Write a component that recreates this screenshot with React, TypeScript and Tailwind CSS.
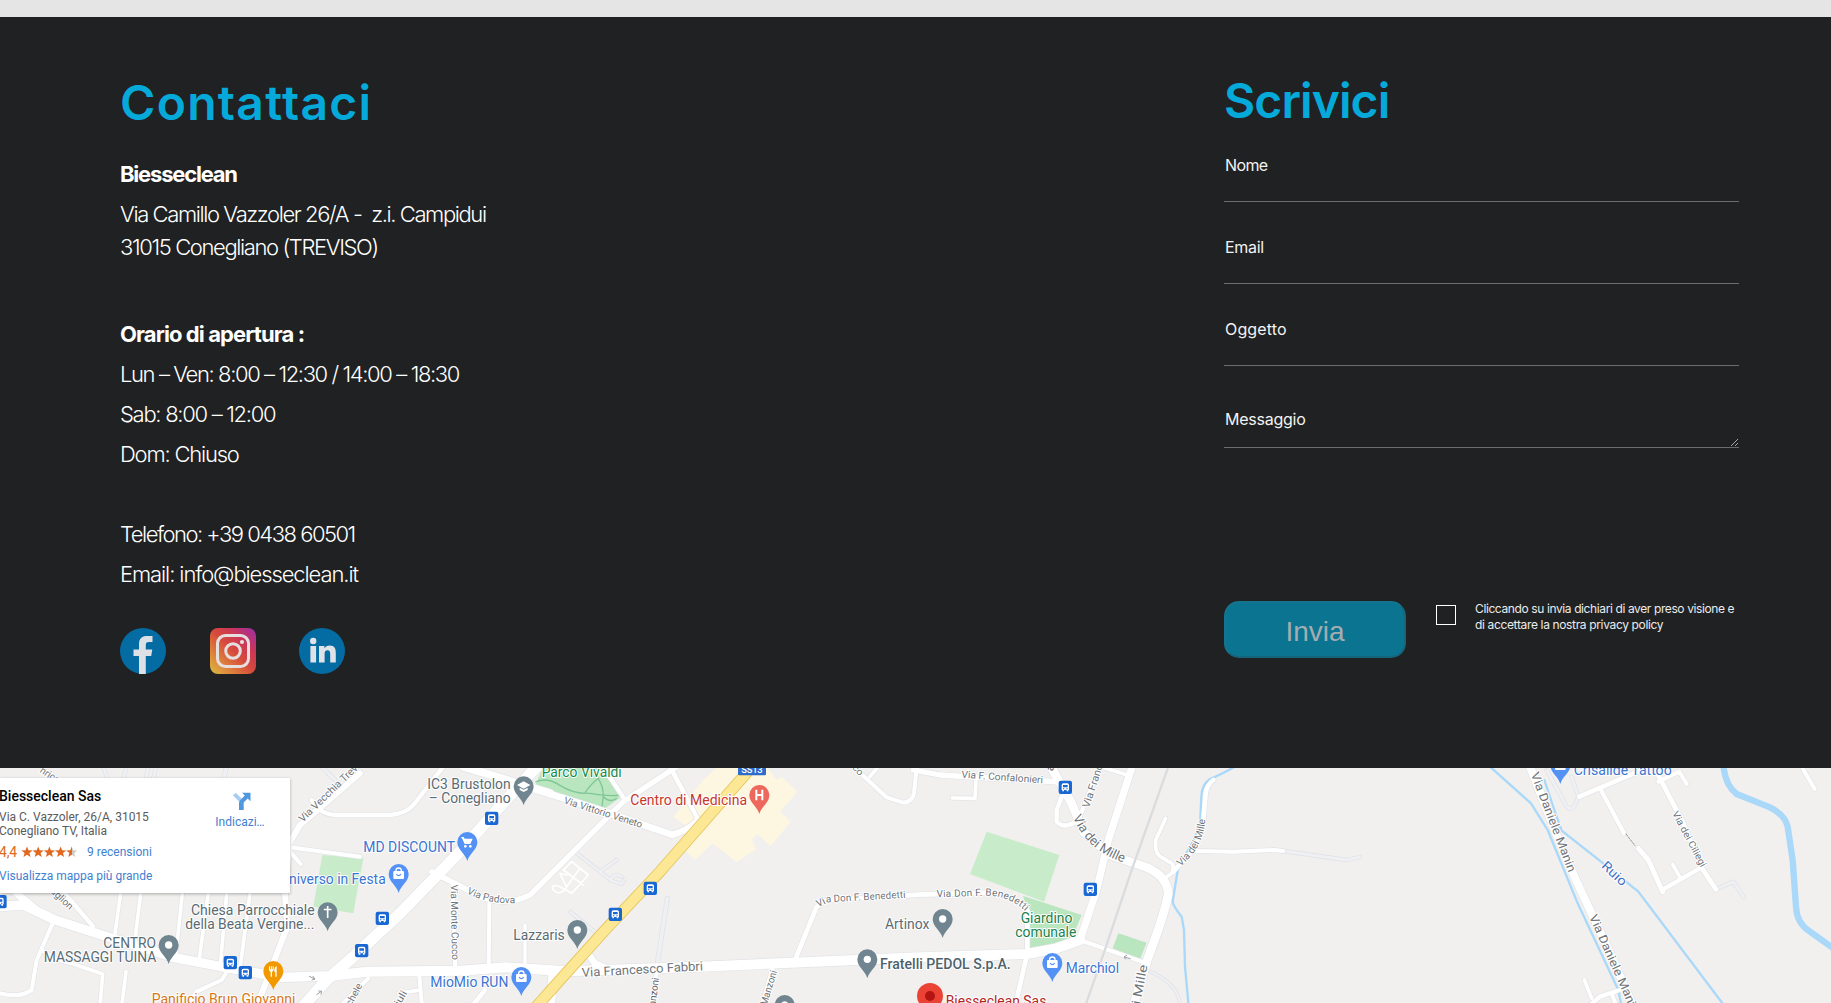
import React from "react";

/* Map geometry is in a fine grid: three units per CSS pixel. */
type Road = [number, string];

const roads: Road[] = [
  [28, "M-10 440 L70 435 L160 478 L320 530 L520 592 L700 627 L850 652 L970 648"],
  [22, "M50 400 L110 450"],
  [34, "M1610 20 L1500 140 L1380 275 L1200 460 L1060 590 L980 660 L890 760"],
  [30, "M970 650 L1100 635 L1380 632 L1520 622 L1700 634 L2100 620 L2760 592 L3080 582 L3170 565 L3240 540"],
  [18, "M1080 40 L900 195 L868 250 L855 400 L862 500 L835 570 L770 740"],
  [13, "M935 120 Q960 165 1010 165 L1170 165 Q1220 160 1240 135 L1330 20"],
  [12, "M870 262 L1080 290"],
  [12, "M870 275 L902 312"],
  [11, "M362 400 L345 520"], [11, "M422 400 L405 540"], [11, "M547 400 L528 580"],
  [11, "M625 400 L598 595"], [11, "M680 400 L662 605"], [11, "M750 400 L720 625"],
  [13, "M185 390 L280 500"],
  [12, "M158 490 L110 600 L95 690 Q60 715 0 700"],
  [11, "M125 570 Q160 600 220 612 L308 642 L300 740"],
  [11, "M378 635 L365 740"],
  [12, "M690 620 L665 660 L590 695 L560 740"],
  [16, "M1295 335 L1380 378 L1440 410 Q1520 440 1590 405 L1710 285 L1870 125 L2030 20"],
  [13, "M1358 372 L1366 630"],
  [12, "M1105 655 L1010 750"], [12, "M1258 645 L1266 740"], [11, "M1195 700 L1260 690"],
  [24, "M1390 20 L1560 72 L1650 100"],
  [20, "M1600 86 L1800 150 L2015 224 Q2060 215 2095 180"],
  [14, "M2010 20 L2095 180"],
  [13, "M1805 15 L1872 115"],
  [12, "M1468 430 L1466 620"], [10, "M1575 495 L1575 620"],
  [20, "M1760 575 L1785 610 L1840 635"],
  [28, "M1660 640 L1650 740"], [14, "M1455 690 L1415 740"],
  [14, "M2385 600 L2450 440 L2480 420 L2760 404 L2965 398 Q3050 405 3082 450 L3082 580"],
  [12, "M2320 615 L2285 740"], [11, "M1972 630 L1952 740"],
  [12, "M2560 20 L2660 112 L2710 128 Q2738 125 2742 100 L2750 20"],
  [11, "M2610 50 L2635 20"],
  [16, "M2740 30 L2820 45 L3180 66"],
  [11, "M2928 60 L2925 115 L2857 114"],
  [26, "M3150 15 L3215 130 L3250 215 L3330 285 L3420 315 Q3500 340 3505 400 Q3495 460 3440 605 L3400 740"],
  [13, "M3185 110 L3170 150 L3170 185 Q3195 210 3235 180 L3300 20"],
  [22, "M3398 15 L3325 240 L3290 390 L3240 540"],
  [11, "M3315 24 L3382 45"],
  [12, "M3240 540 L3440 610"], [14, "M3082 580 L3045 740"],
  [11, "M3497 175 L3467 240 Q3462 285 3490 295 L3518 312 Q3525 340 3500 350"],
  [14, "M3640 60 Q3620 75 3617 100 L3608 200 L3580 270 L3520 335"],
  [12, "M3590 273 L3700 275 L3822 270 L3850 273"],
  [24, "M4588 15 L4670 225 L4730 365 L4810 535 L4900 740"],
  [14, "M4738 110 L4960 15 L4985 65 L5050 190 L5104 322 L5148 388"],
  [13, "M4803 90 L4872 220"], [15, "M4915 265 L4945 300 L4988 395"],
  [12, "M4975 65 L5038 35 L5060 72"], [13, "M4990 388 L5104 322"],
  [11, "M5018 313 L5040 352"], [12, "M5405 20 L5444 87"],
  [11, "M4753 660 L4775 715"], [13, "M4765 740 L4800 710 L4860 690"], [12, "M4835 700 L4850 740"],
];

const lanes: Road[] = [
  [9, "M310 20 L322 55"], [9, "M380 20 L370 55"], [9, "M445 20 L438 55"], [9, "M468 20 L460 55"], [11, "M680 20 L670 60"],
  [10, "M965 20 L1005 60"],
  [8, "M1725 275 L1800 335 L1835 362 L1865 372 L1875 358 M1800 335 L1850 300 M1832 362 Q1840 335 1865 350"],
  [8, "M1710 455 L1790 520"], [11, "M2002 415 L1972 610"],
  [9, "M3850 273 L4040 300 L4080 291"], [7, "M3440 630 Q3540 670 3540 740"],
  [9, "M4640 30 L4700 140 Q4720 160 4735 110 L4715 50"],
  [9, "M5148 388 L5200 365 L5232 412"],
];

const PIN = "M0 57 C-6 34 -30 24 -30 0 A30 30 0 1 1 30 0 C30 24 6 34 0 57Z";

function Pin({ x, y, color, kind }: { x: number; y: number; color: string; kind?: string }) {
  return (
    <g transform={`translate(${x} ${y})`}>
      <path d={PIN} fill={color} />
      {!kind && <circle r="11" fill="#fff" />}
      {kind === "cross" && <path d="M-2.500 -19h5v8h9v5h-9v23h-5v-23h-9v-5h9z" fill="#fff" />}
      {kind === "bag" && (
        <g>
          <rect x="-16" y="-9" width="32" height="24" rx="3" fill="#fff" />
          <path d="M-8 -8v-3a8 7 0 0 1 16 0v3" fill="none" stroke="#fff" strokeWidth="4" />
          <path d="M-7 0q7 10 14 0" fill="none" stroke={color} strokeWidth="3.500" />
        </g>
      )}
      {kind === "cart" && (
        <g fill="#fff">
          <path d="M-18 -15h7l3 5h24l-7 16h-17l-8-17h-2z" />
          <circle cx="-6" cy="13" r="4" /><circle cx="9" cy="13" r="4" />
        </g>
      )}
      {kind === "school" && (
        <g fill="#fff"><path d="M0 -15 20 -4 0 7 -20 -4z" /><path d="M-12 4v7l12 6 12-6V4L0 10z" /></g>
      )}
      {kind === "food" && (
        <path d="M-13 -14v10q0 5 5 6v15h4v-15q5-1 5-6v-10h-3v9h-2.500v-9h-3v9h-2.500v-9zM6 17h4V-15q-7 3-7 12v6h3z" fill="#fff" />
      )}
      {kind === "hospital" && <path d="M-12 -16h6v13h12v-13h6v32h-6V3H-6v13h-6z" fill="#fff" />}
    </g>
  );
}

function Bus({ x, y }: { x: number; y: number }) {
  return (
    <g transform={`translate(${x} ${y})`}>
      <rect x="-20" y="-20" width="40" height="40" rx="6" fill="#1967d2" />
      <path d="M-11 -7q0-5 5-5h12q5 0 5 5v15h-2v4h-5v-4h-8v4h-5v-4h-2z" fill="#fff" />
      <path d="M-7 -7h14v7h-14zM-7 3h4v3h-4zM3 3h4v3h-4z" fill="#1967d2" />
    </g>
  );
}

interface LabelProps {
  x: number; y: number; w: number; children: string; color?: string; size?: number; weight?: number; rot?: number;
}
function Label({ x, y, w, children, color = "#5b6b73", size = 42.5, weight = 400, rot = 0 }: LabelProps) {
  return (
    <text
      transform={`translate(${x} ${y}) rotate(${rot})`}
      textLength={w}
      lengthAdjust="spacingAndGlyphs"
      fontSize={size}
      fontWeight={weight}
      fill={color}
      stroke="#fff"
      strokeWidth="6"
      strokeLinejoin="round"
      paintOrder="stroke"
    >
      {children}
    </text>
  );
}

function Curved({ id, d, children, size = 30, w }: { id: string; d: string; children: string; size?: number; w: number }) {
  return (
    <g>
      <path id={id} d={d} fill="none" />
      <text fontSize={size} fill="#70757a" stroke="#fff" strokeWidth="6" strokeLinejoin="round" paintOrder="stroke" textLength={w}>
        <textPath href={`#${id}`} textLength={w}>{children}</textPath>
      </text>
    </g>
  );
}

const BLUE = "#3b74d1";
const GREY = "#70858f";

function MapDrawing() {
  return (
    <svg className="block h-[235px] w-full font-['Roboto',sans-serif]" viewBox="0 24 5493 705" preserveAspectRatio="none">
      <rect x="0" y="24" width="5493" height="705" fill="#f1f0ef" />
      <g fill="#c8ecca">
        <path d="M967 285 1090 295 1060 460 940 440Z" />
        <path d="M2960 215 3178 285 3132 425 2910 342Z" />
      </g>
      <g fill="#b9e5bf">
        <path d="M1630 20 1604 80 1805 152 1865 110 1825 20Z" />
        <path d="M3070 408 3245 465 3210 548 3090 564Z" />
        <path d="M3355 520 3440 548 3420 597 3338 565Z" />
      </g>
      <path d="M1606 66Q1640 50 1680 76T1770 100Q1830 110 1860 105M1755 98Q1775 70 1795 55Q1810 80 1810 108L1805 145M1810 110Q1830 130 1850 115" fill="none" stroke="#7fc795" strokeWidth="4" />
      <path d="M2110 60 2155 20 2300 20 2330 60 2345 50 2392 95 2340 155 2372 185 2312 258 2272 222 2256 238 2268 268 2210 306 2138 250 2085 300 2052 268 2090 220 2020 170Z" fill="#fdf6e0" />

      <g fill="none" strokeLinecap="round" strokeLinejoin="round">
        {lanes.map(([w, d]) => <path key={d} d={d} stroke="#dfe1e5" strokeWidth={w + 4} />)}
        {lanes.map(([w, d]) => <path key={d} d={d} stroke="#eef0f3" strokeWidth={w} />)}
        {roads.map(([w, d]) => <path key={d} d={d} stroke="#e2e3e6" strokeWidth={w + 4} />)}
        <g stroke="#a9d8f9" strokeWidth="7">
          <path d="M3705 20 Q3660 45 3630 57 Q3605 75 3604 110 L3600 200 L3570 262 L3535 320 L3518 425 Q3520 440 3545 470 L3552 510 L3555 620 L3566 740" />
          <path d="M4470 20 L4593 130 L4643 210 L4733 430 L4855 690 L4865 740" />
          <path d="M4633 60 L4663 150 L4685 212 L4803 305 L4915 395 L5175 740" />
          <path d="M5170 15 Q5175 75 5210 102 L5310 142 Q5355 165 5363 200 L5378 300 L5388 440 Q5390 490 5430 515 L5510 572" strokeWidth="19" />
        </g>
        {roads.map(([w, d]) => <path key={d} d={d} stroke="#fff" strokeWidth={w} />)}
        <path d="M3505 20 L3395 330 L3318 560 L3255 740" stroke="#dbdcde" strokeWidth="7" />
        <path d="M1715 305L1765 345L1715 400L1680 380Q1650 370 1660 390Q1680 410 1700 382L1680 340L1700 345M1690 330L1750 375M1740 325L1700 380M1715 305L1690 330" stroke="#fff" strokeWidth="5" />
        <path d="M2265 10 L2120 175 L1980 335 L1820 505 L1680 660 L1600 750" stroke="#e5c65c" strokeWidth="35" />
        <path d="M2265 10 L2120 175 L1980 335 L1820 505 L1680 660 L1600 750" stroke="#fce794" strokeWidth="30" />
        <path d="M4878 222l27 35" stroke="#8d9297" strokeWidth="3" strokeDasharray="6 5" />
        <path d="M928 649l16 8m-5-8 6 8-9 3M950 704l14-10m-8-1 9 1-2 8M3391 596l-18-5m7-5-8 5 5 6" stroke="#9da1a6" strokeWidth="3" />
      </g>

      <Label x={118} y={36} w={98} size={30} color="#70757a" rot={33}>nrico C.</Label>
      <Label x={150} y={396} w={80} size={30} color="#70757a" rot={43}>aglion</Label>
      <Label x={908} y={188} w={240} size={31} color="#70757a" rot={-44}>Via Vecchia Trevi</Label>
      <Label x={1352} y={374} w={226} size={30} color="#70757a" rot={89}>Via Monte Cucco</Label>
      <Label x={1038} y={770} w={106} size={30} color="#70757a" rot={-62}>Michele</Label>
      <Label x={1184} y={765} w={76} size={30} color="#70757a" rot={-60}>Friuli</Label>
      <Label x={1690} y={130} w={245} size={30} color="#70757a" rot={17.5}>Via Vittorio Veneto</Label>
      <Curved id="padova" d="M1400 400 Q1465 435 1560 429" w={150}>Via Padova</Curved>
      <Label x={1746} y={651} w={364} size={38} color="#70757a" rot={-3.2}>Via Francesco Fabbri</Label>
      <Label x={1962} y={765} w={112} size={30} color="#5f6368" rot={-82}>Manzoni</Label>
      <Label x={2300} y={738} w={108} size={30} color="#70757a" rot={-73}>Manzoni</Label>
      <Curved id="benedetti-west" d="M2455 442 L2485 427 L2722 413" w={266}>Via Don F. Benedetti</Curved>
      <Curved id="benedetti-east" d="M2810 412 L2965 407 Q3035 410 3080 458" w={278}>Via Don F. Benedetti</Curved>
      <Label x={2884} y={53} w={245} size={30} color="#70757a" rot={4}>Via F. Confalonieri</Label>
      <Label x={3158} y={35} w={22} size={34} color="#5f6368" rot={-75}>a</Label>
      <Label x={2555} y={24} w={35} size={28} color="#70757a" rot={45}>co</Label>
      <Label x={3267} y={145} w={160} size={31} color="#70757a" rot={-72}>Via Francia</Label>
      <Curved id="mille-main" d="M3218 172 C3245 225 3270 270 3370 308" size={39} w={210}>Via dei Mille</Curved>
      <Curved id="mille-east" d="M3541 320 Q3612 262 3616 175" size={31} w={166}>Via dei Mille</Curved>
      <Label x={3410} y={785} w={172} size={37} color="#70757a" rot={-79}>dei Mille</Label>
      <Label x={4592} y={42} w={318} size={36} color="#70757a" rot={69}>Via Daniele Manin</Label>
      <Label x={4767} y={470} w={318} size={36} color="#70757a" rot={66}>Via Daniele Manin</Label>
      <Label x={5016} y={160} w={185} size={29} color="#70757a" rot={62}>Via dei Ciliegi</Label>
      <Label x={4802} y={320} w={88} size={39} color="#3f6fc4" rot={43}>Ruio</Label>

      <Bus x={0} y={425} /><Bus x={691} y={608} /><Bus x={736} y={638} /><Bus x={1085} y={572} /><Bus x={1147} y={475} />
      <Bus x={1475} y={175} /><Bus x={1951} y={385} /><Bus x={1846} y={463} /><Bus x={3196} y={82} /><Bus x={3271} y={388} />

      <Pin x={506} y={555} color={GREY} />
      <Label x={310} y={564} w={158}>CENTRO</Label>
      <Label x={131} y={606} w={338}>MASSAGGI TUINA</Label>
      <Pin x={983} y={457} color={GREY} kind="cross" />
      <Label x={573} y={465} w={371}>Chiesa Parrocchiale</Label>
      <Label x={556} y={507} w={387}>della Beata Vergine...</Label>
      <Pin x={820} y={633} color="#f29900" kind="food" />
      <Label x={455} y={732} w={431} color="#d67718">Panificio Brun Giovanni</Label>
      <Pin x={1196} y={342} color="#5491f5" kind="bag" />
      <Label x={840} y={372} w={317} color={BLUE}>Universo in Festa</Label>
      <Pin x={1402} y={246} color="#5491f5" kind="cart" />
      <Label x={1090} y={276} w={275} color={BLUE}>MD DISCOUNT</Label>
      <Pin x={1571} y={79} color={GREY} kind="school" />
      <Label x={1282} y={87} w={250}>IC3 Brustolon</Label>
      <Label x={1286} y={129} w={246}>– Conegliano</Label>
      <Label x={1625} y={51} w={240} color="#188a45">Parco Vivaldi</Label>
      <Pin x={2278} y={105} color="#ee675c" kind="hospital" />
      <Label x={1891} y={135} w={350} color="#c5382e">Centro di Medicina</Label>
      <Pin x={1732} y={510} color={GREY} />
      <Label x={1540} y={540} w={154}>Lazzaris</Label>
      <Pin x={1564} y={651} color="#5491f5" kind="bag" />
      <Label x={1291} y={681} w={234} color={BLUE}>MioMio RUN</Label>
      <Pin x={2602} y={598} color={GREY} />
      <Label x={2640} y={627} w={392} weight={500} color="#4d626c">Fratelli PEDOL S.p.A.</Label>
      <Pin x={2828} y={477} color={GREY} />
      <Label x={2655} y={507} w={133}>Artinox</Label>
      <Pin x={2354} y={735} color={GREY} />
      <Label x={3062} y={489} w={155} color="#23804a">Giardino</Label>
      <Label x={3046} y={531} w={183} color="#23804a">comunale</Label>
      <Pin x={3157} y={609} color="#5491f5" kind="bag" />
      <Label x={3197} y={639} w={160} color={BLUE}>Marchiol</Label>
      <circle cx="2790" cy="708" r="39" fill="#ea4335" /><circle cx="2790" cy="708" r="15" fill="#b31412" />
      <Label x={2837} y={737} w={302} color="#b3261e">Biesseclean Sas</Label>
      <Pin x={4681} y={15} color="#5491f5" kind="bag" />
      <Label x={4721} y={45} w={294} color={BLUE}>Crisalide Tattoo</Label>
      <rect x="2214" y="4" width="84" height="42" rx="4" fill="#2f6bc9" />
      <text x="2224" y="39" textLength="64" fontSize="28" fontWeight="500" fill="#fff">SS13</text>
    </svg>
  );
}

const STAR = "M6 .5 7.500 4.300 11.600 4.500 8.400 7 9.500 11 6 8.800 2.500 11 3.600 7 .4 4.500 4.500 4.300Z";

function MapCard() {
  return (
    <div className="absolute left-0 top-[10px] h-[115px] w-[290px] bg-white font-['Roboto',sans-serif] text-xs leading-[14px] text-[#5b5b5b] shadow-[0_1px_3px_rgba(0,0,0,0.3)]">
      <div className="-ml-px flex justify-between pt-[9px]">
        <div className="whitespace-nowrap">
          <div className="text-sm leading-[18px] font-medium text-black">Biesseclean Sas</div>
          <div className="mt-[5px]">Via C. Vazzoler, 26/A, 31015</div>
          <div>Conegliano TV, Italia</div>
          <div className="mt-[6px] flex items-center">
            <span className="w-[22px] text-sm leading-4 tracking-[-0.2px] text-[#dd6b20]">4,4</span>
            <svg className="h-3 w-[56px]" viewBox="0 0 56 12">
              <defs>
                <linearGradient id="half"><stop offset=".5" stopColor="#e0691f" /><stop offset=".5" stopColor="#cfcac6" /></linearGradient>
              </defs>
              {[0, 1, 2, 3, 4].map((i) => (
                <path key={i} d={STAR} transform={`translate(${i * 11.2} 0)`} fill={i === 4 ? "url(#half)" : "#e0691f"} />
              ))}
            </svg>
            <span className="ml-[10px] text-[#427fd0]">9 recensioni</span>
          </div>
          <div className="mt-[9px] text-[#427fd0]">Visualizza mappa più grande</div>
        </div>
        <div className="mr-[25px] flex w-[50px] flex-col items-center pt-[5px] text-[#427fd0]">
          <svg className="ml-[3px] h-[19px] w-[19px]" viewBox="0 0 19 19">
            <path d="M1 3.500 3.800 .7 9.500 6.500V12z" fill="#a9cdf1" />
            <path d="M7 18V11Q7 9.500 8 8.500L12.800 3.600 10 .8H18.500V9.200L15.700 6.400 11.700 10.500V18z" fill="#4f97df" />
          </svg>
          <div className="mt-1">Indicazi…</div>
        </div>
      </div>
    </div>
  );
}

const line = "whitespace-nowrap leading-[40px]";

function Contacts() {
  return (
    <section className="ml-[120px] w-[420px] pt-[55.5px] text-[22px] text-white">
      <h2 className="mb-[21.5px] text-[48px] leading-[60px] font-semibold tracking-[1.3px] text-[#06aada]">Contattaci</h2>
      <p className={`${line} font-bold tracking-[-1.2px]`}>Biesseclean</p>
      <p className="pt-[3.5px] leading-[33px] font-light whitespace-nowrap">
        <span className="tracking-[-1.4px]">Via Camillo Vazzoler 26/A -&nbsp; z.i. Campidui</span><br />
        <span className="tracking-[-1.38px]">31015 Conegliano (TREVISO)</span>
      </p>
      <p className={`${line} mt-[50.5px] font-bold tracking-[-0.9px]`}>Orario di apertura :</p>
      <p className={`${line} font-light tracking-[-1.4px]`}>Lun – Ven: 8:00 – 12:30 / 14:00 – 18:30</p>
      <p className={`${line} font-light tracking-[-1.3px]`}>Sab: 8:00 – 12:00</p>
      <p className={`${line} font-light tracking-[-1.2px]`}>Dom: Chiuso</p>
      <p className={`${line} mt-[40px] font-light tracking-[-1.5px]`}>Telefono: +39 0438 60501</p>
      <p className={`${line} font-light tracking-[-1.1px]`}>Email: info@biesseclean.it</p>
      <div className="mt-[34px] flex gap-[44px]">
        <svg className="size-[46px]" viewBox="0 0 46 46">
          <circle cx="23" cy="23" r="23" fill="#056ba3" />
          <path d="M19 46V28h-5.500v-6.500H19v-5.200C19 10.500 22 8 27 8h5.500v6H29c-2.500 0-3.200 1.200-3.200 3.200v4.300h6.500L31.200 28h-5.400v18a23 23 0 0 1-6.800 0z" fill="#dde0e4" />
        </svg>
        <svg className="size-[46px]" viewBox="0 0 46 46">
          <defs>
            <linearGradient id="insta" x1="0" y1="1" x2="1" y2="0">
              <stop offset="0" stopColor="#d9bd42" /><stop offset=".22" stopColor="#de8a3c" /><stop offset=".5" stopColor="#d74a3b" />
              <stop offset=".72" stopColor="#cb3659" /><stop offset="1" stopColor="#9c2fa8" />
            </linearGradient>
          </defs>
          <rect width="46" height="46" rx="8" fill="url(#insta)" />
          <rect x="7.500" y="7.500" width="31" height="31" rx="8" fill="none" stroke="#e5dfe0" strokeWidth="3" />
          <circle cx="23" cy="23" r="7.300" fill="none" stroke="#e5dfe0" strokeWidth="3" />
          <circle cx="32" cy="14" r="2.100" fill="#e5dfe0" />
        </svg>
        <svg className="-ml-px size-[46px]" viewBox="0 0 46 46">
          <circle cx="23" cy="23" r="23" fill="#056ba3" />
          <g fill="#dfe3e7">
            <circle cx="14.200" cy="13" r="3.200" />
            <path d="M11.400 18h5.700v16.500h-5.700zM20 18h5.400v2.300c1-1.700 2.900-2.800 5.200-2.800 5 0 6.200 3 6.200 7.700v9.300h-5.600v-8.300c0-2.200-.3-4-2.600-4s-3 1.600-3 4v8.300H20z" />
          </g>
        </svg>
      </div>
    </section>
  );
}

function Field({ label, className }: { label: string; className: string }) {
  return (
    <label className={`flex items-end border-b border-[#6a6c6d] pl-px text-[16px] leading-6 text-[#f3f3f3] ${className}`}>
      {label}
    </label>
  );
}

function ContactForm() {
  return (
    <form className="mr-[92px] w-[515px] pt-[53.5px] text-white">
      <h2 className="text-[48px] leading-[60px] font-semibold tracking-[-0.9px] text-[#06aada]">Scrivici</h2>
      <Field label="Nome" className="h-[71px] pb-6 tracking-[-0.6px]" />
      <Field label="Email" className="h-[82px] pb-6 tracking-[-0.3px]" />
      <Field label="Oggetto" className="h-[82px] pb-6 tracking-[0.15px]" />
      <div className="relative">
        <Field label="Messaggio" className="h-[82px] pb-4 tracking-[-0.25px]" />
        <svg className="absolute right-px bottom-[2px] size-[7px]" viewBox="0 0 7 7" stroke="#b5b5b5" strokeWidth=".9">
          <path d="M0 7 7 0M4 7 7 4" />
        </svg>
      </div>
      <div className="mt-[153px] flex">
        <button type="button" className="h-[57px] w-[182px] shrink-0 rounded-[15px] border-2 border-[#15657d] border-t-[#14758f] border-l-[#14758f] bg-[#0b7491] pt-[5px] font-['Liberation_Sans',sans-serif] text-[28px] leading-none text-[#a3adb1]">
          Invia
        </button>
        <span className="mt-1 ml-[30px] size-5 shrink-0 border border-white" />
        <p className="ml-[19px] text-[12px] leading-4 whitespace-nowrap text-[#ececec]">
          <span className="tracking-[-0.39px]">Cliccando su invia dichiari di aver preso visione e</span><br />
          <span className="tracking-[-0.35px]">di accettare la nostra privacy policy</span>
        </p>
      </div>
    </form>
  );
}

export default function App() {
  return (
    <div className="h-[1003px] w-full overflow-hidden bg-[#1f2122] font-['Inter',sans-serif]">
      <div className="h-[17px] bg-[#e5e5e5]" />
      <main className="flex h-[751px] justify-between">
        <Contacts />
        <ContactForm />
      </main>
      <div className="relative h-[235px] overflow-hidden">
        <MapDrawing />
        <MapCard />
      </div>
    </div>
  );
}
